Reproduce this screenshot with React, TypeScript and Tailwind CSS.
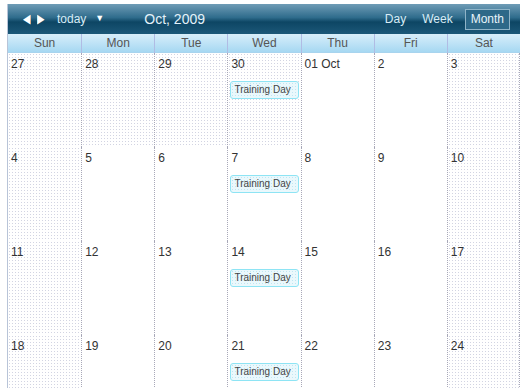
const days = ['Sun', 'Mon', 'Tue', 'Wed', 'Thu', 'Fri', 'Sat'];

type Cell = { label: string; muted: boolean; event?: boolean };

const weeks: Cell[][] = [
  [
    { label: '27', muted: true },
    { label: '28', muted: true },
    { label: '29', muted: true },
    { label: '30', muted: true, event: true },
    { label: '01 Oct', muted: false },
    { label: '2', muted: false },
    { label: '3', muted: true },
  ],
  [
    { label: '4', muted: true },
    { label: '5', muted: false },
    { label: '6', muted: false },
    { label: '7', muted: false, event: true },
    { label: '8', muted: false },
    { label: '9', muted: false },
    { label: '10', muted: true },
  ],
  [
    { label: '11', muted: true },
    { label: '12', muted: false },
    { label: '13', muted: false },
    { label: '14', muted: false, event: true },
    { label: '15', muted: false },
    { label: '16', muted: false },
    { label: '17', muted: true },
  ],
  [
    { label: '18', muted: true },
    { label: '19', muted: false },
    { label: '20', muted: false },
    { label: '21', muted: false, event: true },
    { label: '22', muted: false },
    { label: '23', muted: false },
    { label: '24', muted: true },
  ],
];

const dotted =
  'bg-white bg-[radial-gradient(#d2d4e2_0.8px,transparent_0.9px)] bg-[size:3px_3px]';

const App = () => {
  return (
    <div
      className="w-[525px] h-[388px] overflow-hidden bg-white pt-[4px] pl-[7px]"
      style={{ fontFamily: '"Liberation Sans", Arial, sans-serif' }}
    >
      <div className="w-[513px] border-l border-[#b8c4d8]">
        {/* toolbar */}
        <div className="h-[30px] flex items-center bg-[linear-gradient(#6f9cb6_0%,#2f6c8c_45%,#0d4664_60%,#1c5878_100%)] text-[#d8ecf6]">
          <div className="flex items-center gap-[4px] ml-[14px] text-white text-[13px]">
            <span className="scale-x-75">◀</span>
            <span className="scale-x-75">▶</span>
          </div>
          <span className="ml-[11px] text-[12px]">today</span>
          <span className="ml-[9px] text-[9px] text-white">▼</span>
          <span className="ml-[40px] text-[14px] text-[#e4f2fa]">Oct, 2009</span>
          <div className="ml-auto mr-[10px] flex items-center text-[12px]">
            <span className="mr-[16px]">Day</span>
            <span className="mr-[12px]">Week</span>
            <span className="border border-[#8fb4c8] bg-[#2d6888] px-[5px] h-[21px] leading-[19px] text-[#e8f4fa]">
              Month
            </span>
          </div>
        </div>
        {/* day names */}
        <div className="grid grid-cols-7 h-[19px] bg-[linear-gradient(#d8eefa,#a6d8f2)] border-b border-[#a8d4ee]">
          {days.map((d, i) => (
            <div
              key={d}
              className={`text-center text-[12px] leading-[19px] text-[#555] ${
                i > 0 ? 'border-l border-[#b0bce4]' : ''
              }`}
            >
              {d}
            </div>
          ))}
        </div>
        {/* weeks */}
        {weeks.map((week, w) => (
          <div key={w} className="grid grid-cols-7 h-[94px]">
            {week.map((c, i) => (
              <div
                key={i}
                className={`relative border-dotted border-[#a8a8b8] ${i > 0 ? 'border-l' : ''} ${
                  i === 6 ? 'border-r' : ''
                } ${c.muted ? dotted : 'bg-white'}`}
              >
                <div className="pl-[3px] pt-[4px] text-[12px] leading-[14px] text-[#333]">
                  {c.label}
                </div>
                {c.event && (
                  <div className="mt-[10px] mx-[2px] h-[18px] rounded-[3px] border border-[#8ee4f4] bg-[#eaf8fc] bg-[radial-gradient(#bfe6f2_0.8px,transparent_0.9px)] bg-[size:3px_3px] pl-[3px] text-[10px] leading-[16px] text-[#444]">
                    Training Day
                  </div>
                )}
              </div>
            ))}
          </div>
        ))}
      </div>
    </div>
  );
};

export default App;
